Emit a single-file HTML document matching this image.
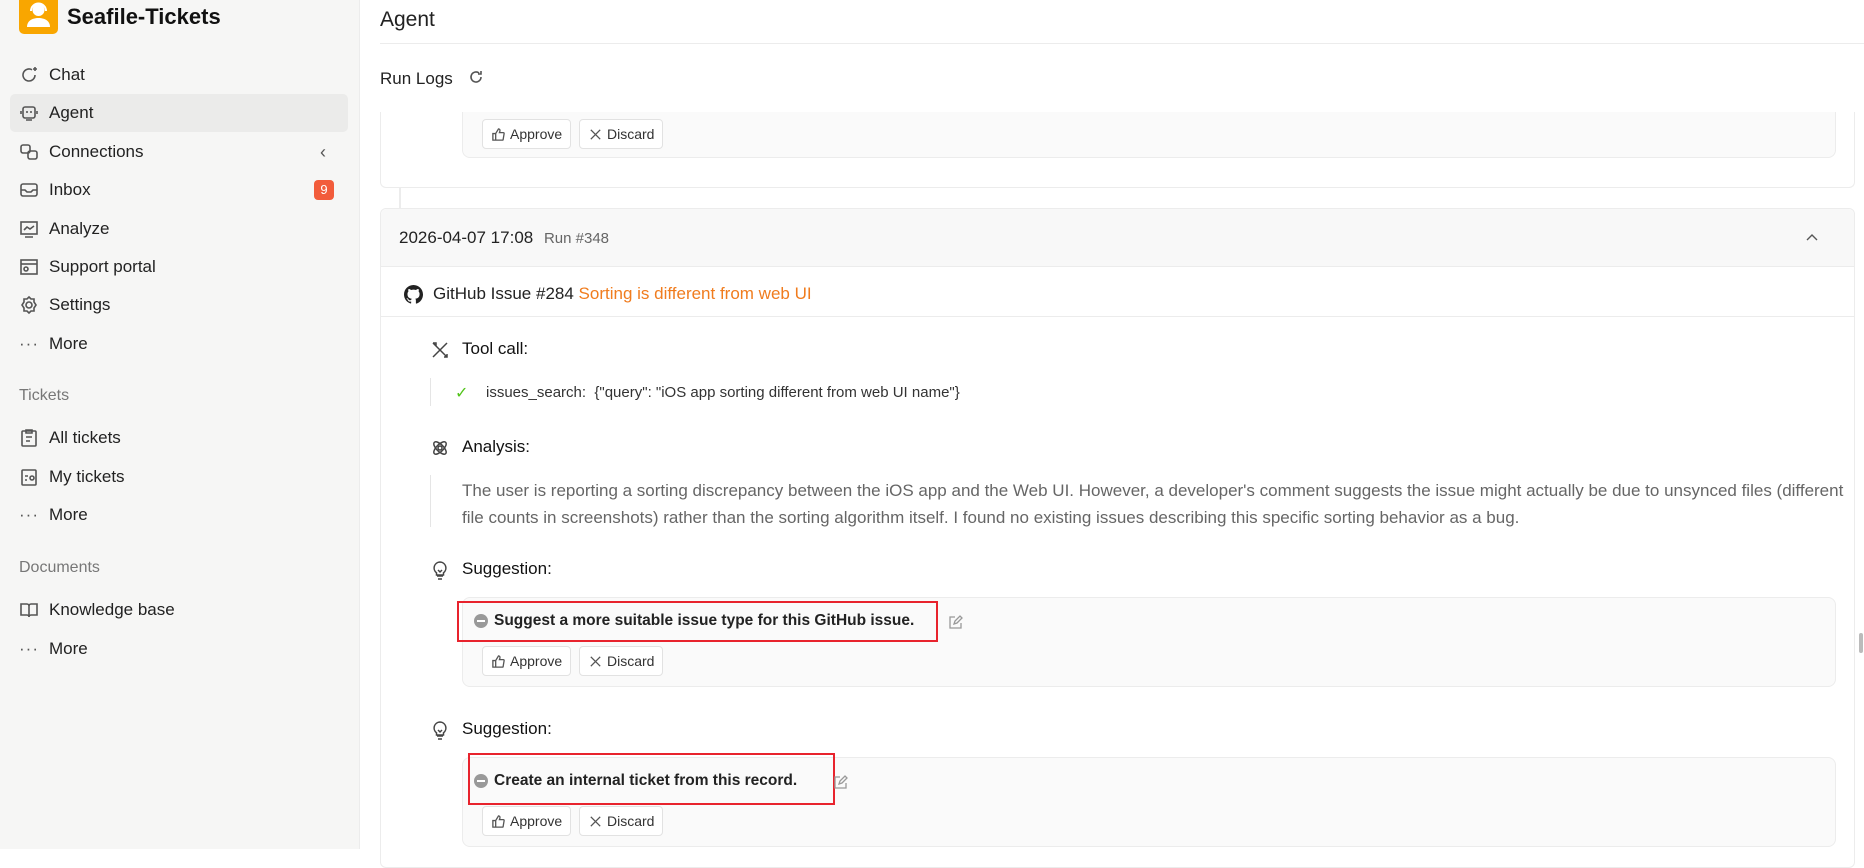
<!DOCTYPE html>
<html><head><meta charset="utf-8"><style>
*{box-sizing:border-box;margin:0;padding:0}
body{width:1864px;height:849px;overflow:hidden;font-family:"Liberation Sans",sans-serif;color:#212529;background:#fff;position:relative}
.a{position:absolute}
.side{left:0;top:0;width:360px;height:849px;background:#f6f6f5;border-right:1px solid #ececec}
.nav{position:absolute;left:10px;width:338px;height:38px;display:flex;align-items:center;padding-left:9px;font-size:17px;color:#222}
.nav svg{width:20px;height:20px;margin-right:10px;stroke:#555;fill:none;stroke-width:1.6}
.sec{position:absolute;left:19px;font-size:16px;color:#777}
.btn{position:absolute;height:30px;border:1px solid #e2e2e2;border-radius:4px;background:#fff;font-size:14px;color:#333;display:flex;align-items:center;padding:0 8px;gap:4px}
.btn svg{width:15px;height:15px;stroke:#555;fill:none;stroke-width:1.4}
.box{position:absolute;left:462px;width:1374px;border:1px solid #ececec;border-radius:8px;background:#fafafa}
.lbl{position:absolute;left:462px;font-size:17px;color:#111}
.ico{position:absolute;left:430px;width:20px;height:20px;stroke:#444;fill:none;stroke-width:1.5}
.red{position:absolute;border:2px solid #e8232d}
.sg{position:absolute;font-size:15.5px;font-weight:bold;color:#222;display:flex;align-items:center;gap:6px}
.dot{width:14px;height:14px;border-radius:50%;background:#999;display:inline-block;position:relative}
.dot:after{content:"";position:absolute;left:3px;right:3px;top:6px;height:2px;background:#fff}
</style></head><body>
<div class="a side">
 <div class="a" style="left:19px;top:0;width:39px;height:34px;background:#f9a600;border-radius:0 0 5px 5px"><svg width="39" height="34" viewBox="0 0 39 34"><circle cx="19.5" cy="10" r="6" fill="#fff"/><path d="M8 27c0-6 5-9 11.5-9S31 21 31 27z" fill="#fff"/><path d="M12 11a7.5 7.5 0 0115 0" stroke="#fff" stroke-width="2" fill="none"/></svg></div>
 <div class="a" style="left:67px;top:4px;font-size:22px;font-weight:bold;color:#111">Seafile-Tickets</div>
 <div class="nav" style="top:56px"><svg viewBox="0 0 20 20"><path d="M16 10a6 6 0 11-3-5.2"/><path d="M16 2v4M14 4h4"/></svg>Chat</div>
 <div class="nav" style="top:94px;background:#ebebea;border-radius:5px"><svg viewBox="0 0 20 20"><rect x="4" y="4" width="12" height="11" rx="2"/><path d="M8 8v2M12 8v2M2 8v3M18 8v3M7 17h6"/></svg>Agent</div>
 <div class="nav" style="top:133px"><svg viewBox="0 0 20 20"><rect x="2" y="3" width="9" height="8" rx="2"/><rect x="9" y="9" width="9" height="8" rx="2"/></svg>Connections<span style="position:absolute;left:310px;color:#555;font-size:18px">‹</span></div>
 <div class="nav" style="top:171px"><svg viewBox="0 0 20 20"><rect x="2" y="4" width="16" height="12" rx="2"/><path d="M2 10h4l2 2h4l2-2h4"/></svg>Inbox<span style="position:absolute;left:304px;background:#f25c3b;color:#fff;font-size:13px;border-radius:4px;width:20px;height:20px;text-align:center;line-height:20px">9</span></div>
 <div class="nav" style="top:210px"><svg viewBox="0 0 20 20"><rect x="2" y="3" width="16" height="12"/><path d="M5 11l3-3 3 2 4-3M6 18h8"/></svg>Analyze</div>
 <div class="nav" style="top:248px"><svg viewBox="0 0 20 20"><rect x="2" y="3" width="16" height="14"/><path d="M2 7h16"/><circle cx="7" cy="12" r="2"/></svg>Support portal</div>
 <div class="nav" style="top:286px"><svg viewBox="0 0 20 20"><circle cx="10" cy="10" r="3"/><path d="M10 2l2 2h3v3l2 3-2 3v3h-3l-2 2-2-2H5v-3l-2-3 2-3V4h3z"/></svg>Settings</div>
 <div class="nav" style="top:325px"><span style="width:20px;margin-right:10px;color:#555;letter-spacing:1px">···</span>More</div>
 <div class="sec" style="top:387px">Tickets</div>
 <div class="nav" style="top:419px"><svg viewBox="0 0 20 20"><rect x="3" y="3" width="14" height="15" rx="1"/><path d="M7 2h6v3H7zM7 9h6M7 13h4"/></svg>All tickets</div>
 <div class="nav" style="top:458px"><svg viewBox="0 0 20 20"><rect x="3" y="3" width="14" height="15" rx="1"/><path d="M6 9h3M6 13h2"/><circle cx="13" cy="11" r="2"/></svg>My tickets</div>
 <div class="nav" style="top:496px"><span style="width:20px;margin-right:10px;color:#555;letter-spacing:1px">···</span>More</div>
 <div class="sec" style="top:559px">Documents</div>
 <div class="nav" style="top:591px"><svg viewBox="0 0 20 20"><path d="M2 4h6a2 2 0 012 2v11a2 2 0 00-2-2H2zM18 4h-6a2 2 0 00-2 2v11a2 2 0 012-2h6z"/></svg>Knowledge base</div>
 <div class="nav" style="top:630px"><span style="width:20px;margin-right:10px;color:#555;letter-spacing:1px">···</span>More</div>
</div>

<div class="a" style="left:380px;top:8px;font-size:21px;color:#222">Agent</div>
<div class="a" style="left:380px;top:43px;width:1484px;height:1px;background:#ececec"></div>
<div class="a" style="left:380px;top:69px;font-size:17px;color:#222">Run Logs</div>
<svg class="a" style="left:468px;top:69px" width="16" height="16" viewBox="0 0 16 16" fill="none" stroke="#555" stroke-width="1.6"><path d="M13 8a5 5 0 11-2-4M13 2v3h-3"/></svg>

<div class="a" style="left:380px;top:100px;width:1475px;height:88px;border:1px solid #ececec;border-top:none;border-radius:0 0 6px 6px"></div>
<div class="box" style="top:100px;height:58px;border-top:none;border-radius:0 0 8px 8px"></div>
<div class="a" style="top:100px;width:1502px;height:12px;background:#fff;left:362px"></div>
<div class="btn" style="left:482px;top:119px"><svg viewBox="0 0 16 16"><path d="M2 7h3v7H2zM5 7l3-5c1 0 2 1 1.5 2.5L9 6h4a1 1 0 011 1l-1 6a1 1 0 01-1 1H5"/></svg>Approve</div>
<div class="btn" style="left:579px;top:119px"><svg viewBox="0 0 16 16"><path d="M3 3l10 10M13 3L3 13"/></svg>Discard</div>
<div class="a" style="left:399px;top:188px;width:2px;height:20px;background:#ececec"></div>

<div class="a" style="left:380px;top:208px;width:1475px;height:660px;border:1px solid #ececec;border-radius:6px"></div>
<div class="a" style="left:381px;top:209px;width:1473px;height:58px;background:#f8f8f8;border-bottom:1px solid #ececec;border-radius:6px 6px 0 0"></div>
<div class="a" style="left:399px;top:228px;font-size:17px;color:#222">2026-04-07 17:08 <span style="font-size:15px;color:#666;margin-left:6px">Run #348</span></div>
<svg class="a" style="left:1805px;top:232px" width="14" height="10" viewBox="0 0 14 10" fill="none" stroke="#555" stroke-width="1.4"><path d="M2 8l5-5 5 5"/></svg>
<svg class="a" style="left:404px;top:285px" width="19" height="19" viewBox="0 0 16 16"><path fill="#222" d="M8 0C3.58 0 0 3.58 0 8c0 3.54 2.290 6.53 5.47 7.59.4.07.55-.17.55-.38v-1.33c-2.23.48-2.7-1.07-2.7-1.07-.36-.92-.89-1.17-.89-1.170-.73-.5.05-.49.05-.49.81.06 1.23.83 1.23.83.72 1.23 1.88.87 2.34.67.07-.52.28-.87.51-1.07-1.78-.2-3.64-.89-3.64-3.95 0-.87.31-1.59.82-2.15-.08-.2-.36-1.02.08-2.12 0 0 .67-.21 2.2.82a7.6 7.6 0 014 0c1.53-1.04 2.2-.82 2.2-.82.44 1.1.16 1.92.08 2.12.51.56.82 1.27.82 2.15 0 3.07-1.87 3.75-3.65 3.95.29.25.54.73.54 1.48v2.2c0 .21.15.46.55.38A8 8 0 0016 8c0-4.420-3.58-8-8-8z"/></svg>
<div class="a" style="left:433px;top:284px;font-size:17px;color:#222">GitHub Issue #284 <span style="color:#f07c1e">Sorting is different from web UI</span></div>
<div class="a" style="left:381px;top:316px;width:1473px;height:1px;background:#ececec"></div>

<svg class="ico" style="top:340px" viewBox="0 0 20 20"><path d="M3 3l14 14M17 3L3 17M3 3l3 0 0 3M14 17l3 0 0-3"/></svg>
<div class="lbl" style="top:339px">Tool call:</div>
<div class="a" style="left:430px;top:378px;width:1px;height:28px;background:#e5e5e5"></div>
<div class="a" style="left:455px;top:383px;color:#52c41a;font-size:16px">✓</div>
<div class="a" style="left:486px;top:384px;font-size:15px;color:#333">issues_search:&nbsp;&nbsp;{"query": "iOS app sorting different from web UI name"}</div>

<svg class="ico" style="top:438px" viewBox="0 0 20 20"><circle cx="10" cy="10" r="2"/><ellipse cx="10" cy="10" rx="8" ry="3.5" transform="rotate(45 10 10)"/><ellipse cx="10" cy="10" rx="8" ry="3.5" transform="rotate(-45 10 10)"/></svg>
<div class="lbl" style="top:437px">Analysis:</div>
<div class="a" style="left:430px;top:475px;width:1px;height:52px;background:#e5e5e5"></div>
<div class="a" style="left:462px;top:477px;width:1385px;font-size:17px;line-height:27px;color:#666">The user is reporting a sorting discrepancy between the iOS app and the Web UI. However, a developer's comment suggests the issue might actually be due to unsynced files (different file counts in screenshots) rather than the sorting algorithm itself. I found no existing issues describing this specific sorting behavior as a bug.</div>

<svg class="ico" style="top:560px" viewBox="0 0 20 20"><path d="M7 16h6M8 19h4M10 2a6 6 0 00-3.5 10.8V15h7v-2.2A6 6 0 0010 2zM8 10l2 2 2-2"/></svg>
<div class="lbl" style="top:559px">Suggestion:</div>
<div class="box" style="top:597px;height:90px"></div>
<div class="red" style="left:457px;top:601px;width:481px;height:41px"></div>
<div class="sg" style="left:474px;top:612px"><span class="dot"></span>Suggest a more suitable issue type for this GitHub issue.</div>
<svg class="a" style="left:948px;top:615px" width="15" height="15" viewBox="0 0 15 15" fill="none" stroke="#999" stroke-width="1.3"><path d="M7 2H2v11h11V8M6 9l1-3 5-5 2 2-5 5z"/></svg>
<div class="btn" style="left:482px;top:646px"><svg viewBox="0 0 16 16"><path d="M2 7h3v7H2zM5 7l3-5c1 0 2 1 1.5 2.5L9 6h4a1 1 0 011 1l-1 6a1 1 0 01-1 1H5"/></svg>Approve</div>
<div class="btn" style="left:579px;top:646px"><svg viewBox="0 0 16 16"><path d="M3 3l10 10M13 3L3 13"/></svg>Discard</div>

<svg class="ico" style="top:720px" viewBox="0 0 20 20"><path d="M7 16h6M8 19h4M10 2a6 6 0 00-3.5 10.8V15h7v-2.2A6 6 0 0010 2zM8 10l2 2 2-2"/></svg>
<div class="lbl" style="top:719px">Suggestion:</div>
<div class="box" style="top:757px;height:90px"></div>
<div class="red" style="left:468px;top:753px;width:367px;height:52px"></div>
<div class="sg" style="left:474px;top:772px"><span class="dot"></span>Create an internal ticket from this record.</div>
<svg class="a" style="left:833px;top:775px" width="15" height="15" viewBox="0 0 15 15" fill="none" stroke="#999" stroke-width="1.3"><path d="M7 2H2v11h11V8M6 9l1-3 5-5 2 2-5 5z"/></svg>
<div class="btn" style="left:482px;top:806px"><svg viewBox="0 0 16 16"><path d="M2 7h3v7H2zM5 7l3-5c1 0 2 1 1.5 2.5L9 6h4a1 1 0 011 1l-1 6a1 1 0 01-1 1H5"/></svg>Approve</div>
<div class="btn" style="left:579px;top:806px"><svg viewBox="0 0 16 16"><path d="M3 3l10 10M13 3L3 13"/></svg>Discard</div>
<div class="a" style="left:1859px;top:633px;width:4px;height:20px;background:#bbb;border-radius:2px"></div>
</body></html>
